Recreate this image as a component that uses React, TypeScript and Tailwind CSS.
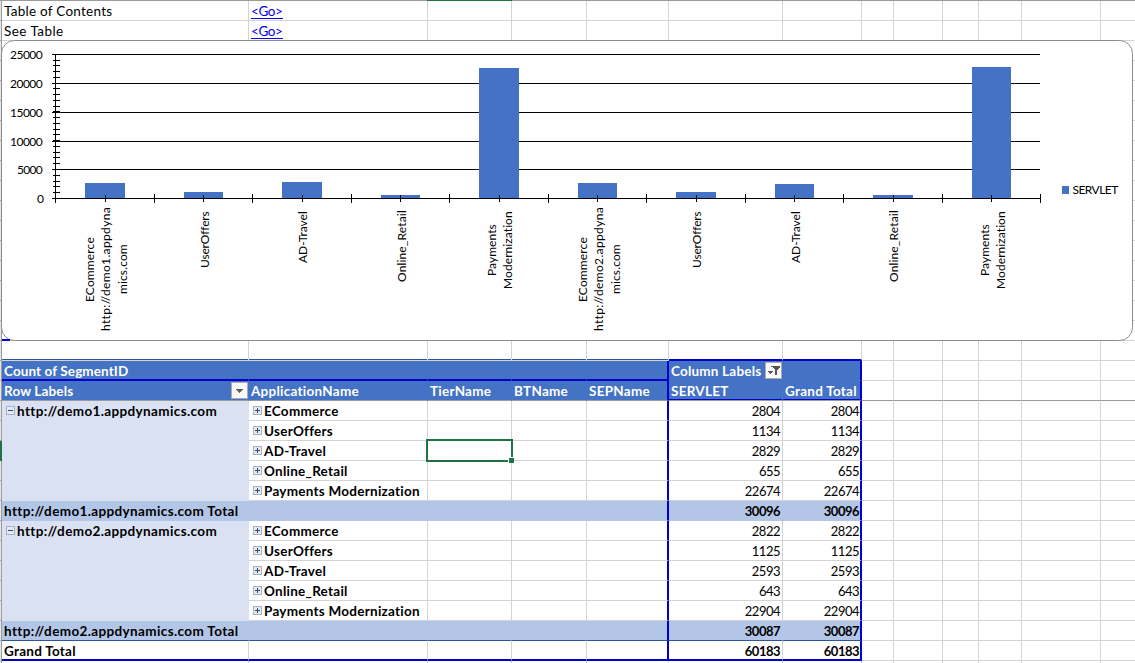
import type { ReactNode } from "react";
import clsx from "clsx";
import { twMerge } from "tailwind-merge";

const PLAIN = "border-[#d4d4d4]";
const HEAD = "bg-[#4472c4] border-[#4472c4] text-white font-bold";
const TOTAL = "bg-[#b4c6e7] border-[#b4c6e7] font-bold";
const GROUP = "bg-[#d9e1f2] border-[#d9e1f2] font-bold";
const BLUE_BOTTOM = "border-b-2 border-b-[#0000cd] pt-px";
const BLUE_RIGHT = "border-r-2 border-r-[#0000cd]";

const WIDTHS = [
  "w-[247px]", "w-[179px]", "w-[84px]", "w-[75px]", "w-[82px]", "w-[114px]", "w-[79px]",
  "w-[32px]", "w-[49px]", "w-[36px]", "w-[43px]", "w-[79px]", "w-[35px]",
];

type CellLook = (col: number) => string;
const plain: CellLook = () => PLAIN;

function Cell({ width, look, children }: { width: string; look: string; children?: ReactNode }) {
  const numeric = typeof children === "number";
  return (
    <div
      className={twMerge(
        "flex h-5 shrink-0 items-center overflow-hidden whitespace-pre border-b border-r",
        width,
        numeric ? "justify-end pr-[2px] text-[13px] tracking-[-0.5px]" : "pl-[2px]",
        look,
      )}
    >
      {children}
    </div>
  );
}

function Row({ cells = [], look = plain, active }: { cells?: ReactNode[]; look?: CellLook; active?: boolean }) {
  return (
    <div className="flex h-5">
      <div className={clsx("w-px shrink-0", active ? "bg-[#217346]" : "border-b border-[#ababab] bg-[#e6e6e6]")} />
      <div className={clsx("w-px shrink-0", active ? "bg-[#217346]" : "bg-[#9b9b9b]")} />
      {WIDTHS.map((w, i) => (
        <Cell key={w + i} width={w} look={look(i)}>{cells[i]}</Cell>
      ))}
    </div>
  );
}

// Frame drawn on both sides of the value columns
const framed = (base: CellLook): CellLook => (col) =>
  clsx(base(col), col === 4 && BLUE_RIGHT, col === 6 && clsx(BLUE_RIGHT, "pr-px"));

const spacerLook: CellLook = (col) =>
  col < 5
    ? "border-[#d4d4d4] shadow-[inset_0_-1px_0_#2f5597]"
    : clsx(PLAIN, col < 7 && BLUE_BOTTOM);
const titleLook = framed((col) => (col < 5 ? clsx(HEAD, BLUE_BOTTOM) : col < 7 ? HEAD : PLAIN));
const headLook = framed((col) =>
  clsx(col < 7 ? HEAD : PLAIN, "border-b-[#9b9b9b]", (col === 5 || col === 6) && "shadow-[inset_0_-1px_0_#0000cd]"),
);
const bodyLook = framed((col) => (col === 0 ? GROUP : PLAIN));
const totalLook = framed((col) => (col < 7 ? TOTAL : PLAIN));
const lastTotalLook = framed((col) => (col < 7 ? clsx(TOTAL, "border-b-[#2f5597]") : PLAIN));
const grandLook = framed((col) => (col < 7 ? clsx(PLAIN, "font-bold", BLUE_BOTTOM) : PLAIN));

function Toggle({ open }: { open?: boolean }) {
  return (
    <svg className="mx-[2px] shrink-0" width="9" height="9" shapeRendering="crispEdges">
      <rect x=".5" y=".5" width="8" height="8" fill="#e4e9f2" stroke="#a3b1c9" />
      <path d={open ? "M2 4.5h5" : "M2 4.5h5M4.5 2v5"} stroke="#34466f" />
    </svg>
  );
}

function FilterButton({ filtered }: { filtered?: boolean }) {
  return (
    <svg width="17" height="17" className="shrink-0" shapeRendering="crispEdges">
      <rect x=".5" y=".5" width="16" height="16" fill="#fafafa" stroke="#ababab" />
      {filtered ? (
        <path d="M6 4h9v1l-3 3v5h-2V8L7 5H6zM3 9h5L5.5 12z" fill="#555" />
      ) : (
        <path d="M5 7h7L8.5 11z" fill="#606060" />
      )}
    </svg>
  );
}

function Go() {
  return (
    <a href="#go" className="h-4 border-b border-[#0000ee] tracking-[-0.4px] text-[#0000ee]">
      {"<Go>"}
    </a>
  );
}

function Host({ children }: { children: ReactNode }) {
  return <span className="tracking-[0.37px]">{children}</span>;
}

const BARS = [
  [85, 40, 183], [184, 39, 192], [282, 40, 182], [381, 39, 195], [479, 40, 68],
  [578, 39, 183], [676, 40, 192], [775, 39, 184], [873, 40, 195], [972, 39, 67],
];
const TICKS = [154, 252, 351, 449, 548, 646, 745, 843, 942, 1040];
const GRID: [number, string, number][] = [
  [54, "25000", 33], [83, "20000", 33], [112, "15000", 33], [141, "10000", 33], [169, "5000", 26], [198, "0", 6],
];

// text, baseline x, bottom y, length
const labelsFor = (host: string): [string, number, number, number][] => [
  ["ECommerce", 94, 302, 65],
  [`http://${host}.appdyna`, 110, 331, 124],
  ["mics.com", 127, 294, 50],
  ["UserOffers", 208.5, 268, 57],
  ["AD-Travel", 307, 263, 52],
  ["Online_Retail", 405.5, 282, 72],
  ["Payments", 496, 276, 52],
  ["Modernization", 512, 289, 78],
];

function Chart() {
  return (
    <svg width="1135" height="301" viewBox="0 40 1135 301" className="block" fontSize="12" fontFamily="Lato, sans-serif">
      <rect x="1.5" y="40.5" width="1131" height="300" rx="13" fill="#fff" stroke="#8c8c8c" />
      <path d="M2 340h8" stroke="#0000cd" strokeWidth="2" />
      <g shapeRendering="crispEdges">
        {GRID.map(([y]) => <rect key={y} x="52" y={y} width="988" height="1" />)}
        {BARS.map(([x, w, y]) => <rect key={x} x={x} y={y} width={w} height={198 - y} fill="#4472c4" />)}
        <rect x="55" y="54" width="1" height="149" />
        {Array.from({ length: 26 }, (_, i) => (
          <rect key={i} x="53" y={Math.floor(54.3 + i * 5.76)} width="7" height="1" />
        ))}
        {TICKS.map((x) => <rect key={x} x={x} y="194" width="1" height="9" />)}
        {TICKS.map((x) => <rect key={x} x={x - 49} y="195" width="1" height="7" />)}
      </g>
      {GRID.map(([y, t, w]) => (
        <text key={t} x={43 - w} y={y + 5} textLength={w}>{t}</text>
      ))}
      {[0, 1].map((n) =>
        labelsFor(n ? "demo2" : "demo1").map(([t, x, y, len]) => (
          <text key={t + n} transform={`translate(${x + n * 492.5} ${y}) rotate(-90)`} textLength={len}>{t}</text>
        )),
      )}
      <rect x="1062" y="186" width="7" height="8" fill="#4472c4" />
      <text x="1072.5" y="194" textLength="46">SERVLET</text>
    </svg>
  );
}

const GROUPS = [
  { host: "http://demo1.appdynamics.com", total: 30096, values: [2804, 1134, 2829, 655, 22674] },
  { host: "http://demo2.appdynamics.com", total: 30087, values: [2822, 1125, 2593, 643, 22904] },
];
const APPS = ["ECommerce", "UserOffers", "AD-Travel", "Online_Retail", "Payments Modernization"];

export default function App() {
  return (
    <main className="flex h-[663px] w-[1135px] flex-col overflow-hidden bg-white font-['Lato',sans-serif] text-[13.5px] leading-4 tracking-[0.26px] text-black">
      <div className="flex h-px shrink-0 bg-[#9b9b9b] pl-[427px]">
        <div className="w-[85px] bg-[#217346]" />
      </div>
      <Row cells={["Table of Contents", <Go />]} />
      <Row cells={[<span className="tracking-[0.45px]">See Table</span>, <Go />]} />
      <section className="-mt-px grid h-[301px] shrink-0">
        <div className="col-start-1 row-start-1 flex flex-col pt-px">
          {Array.from({ length: 15 }, (_, i) => <Row key={i} />)}
        </div>
        <div className="z-10 col-start-1 row-start-1"><Chart /></div>
      </section>
      <Row look={spacerLook} />
      <section className="relative">
        <Row
          look={titleLook}
          cells={[
            <span className="tracking-[0.1px]">Count of SegmentID</span>, "", "", "", "",
            <><span className="w-[94px] tracking-[0.2px]">Column Labels</span><FilterButton filtered /></>,
          ]}
        />
        <Row
          look={headLook}
          cells={[
            <><span className="flex-1 tracking-[0.15px]">Row Labels</span><FilterButton /></>,
            "ApplicationName", "TierName", "BTName", "SEPName", "SERVLET", "Grand Total",
          ]}
        />
        {GROUPS.map((g, gi) => (
          <div key={g.host}>
            {APPS.map((app, i) => (
              <Row
                key={app}
                active={gi === 0 && i === 2}
                look={bodyLook}
                cells={[
                  i === 0 && <><Toggle open /><Host>{g.host}</Host></>,
                  <><Toggle /><b>{app}</b></>,
                  "", "", "", g.values[i], g.values[i],
                ]}
              />
            ))}
            <Row
              look={gi === 1 ? lastTotalLook : totalLook}
              cells={[<Host>{g.host} Total</Host>, "", "", "", "", g.total, g.total]}
            />
          </div>
        ))}
        <Row look={grandLook} cells={["Grand Total", "", "", "", "", 60183, 60183]} />

        <div className="absolute left-[426px] top-[78px] h-[23px] w-[87px] border-2 border-[#217346]">
          <div className="absolute bottom-[-3px] right-[-3px] h-[6px] w-[6px] border-l border-t border-white bg-[#217346]" />
        </div>
      </section>
      <Row />
    </main>
  );
}
